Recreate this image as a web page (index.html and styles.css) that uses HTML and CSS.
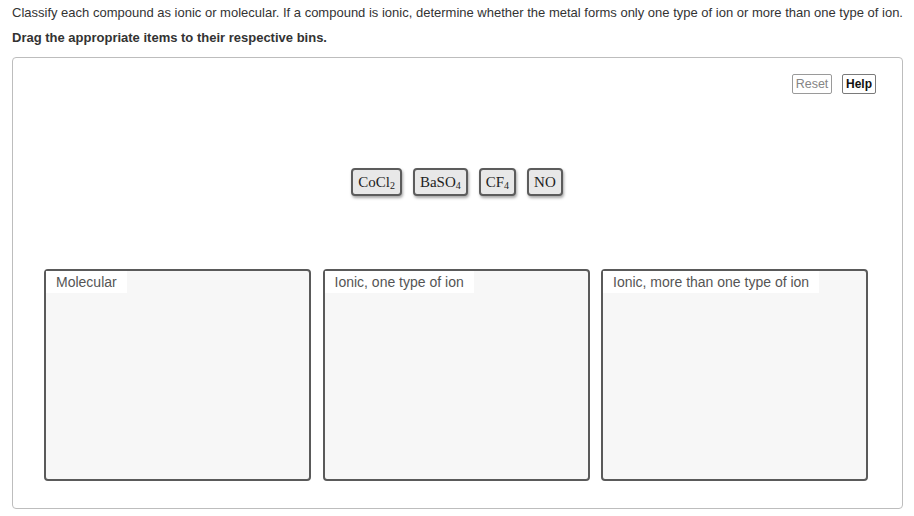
FILE: index.html
```html
<!DOCTYPE html>
<html>
<head>
<meta charset="utf-8">
<link rel="stylesheet" href="styles.css">
</head>
<body>
<div class="page">
  <p class="intro">Classify each compound as ionic or molecular. If a compound is ionic, determine whether the metal forms only one type of ion or more than one type of ion.</p>
  <p class="instr">Drag the appropriate items to their respective bins.</p>
  <div class="panel">
    <div class="toolbar">
      <button class="btn btn-reset">Reset</button>
      <button class="btn btn-help">Help</button>
    </div>
    <div class="items">
      <span class="item">CoCl<sub>2</sub></span>
      <span class="item">BaSO<sub>4</sub></span>
      <span class="item">CF<sub>4</sub></span>
      <span class="item">NO</span>
    </div>
    <div class="bins">
      <div class="bin"><span class="bin-label">Molecular</span></div>
      <div class="bin"><span class="bin-label">Ionic, one type of ion</span></div>
      <div class="bin"><span class="bin-label">Ionic, more than one type of ion</span></div>
    </div>
  </div>
</div>
</body>
</html>
```
FILE: styles.css
```css
html, body {
  margin: 0;
  padding: 0;
  background: #fff;
}
.page {
  font-family: "Liberation Sans", Arial, sans-serif;
  color: #333;
  padding: 5px 11px 0 12px;
}
.intro {
  margin: 0;
  font-size: 13px;
  line-height: 15px;
}
.instr {
  margin: 10px 0 0 0;
  font-size: 13px;
  line-height: 15px;
  font-weight: bold;
}
.panel {
  margin-top: 12px;
  height: 452px;
  border: 1px solid #bdbdbd;
  border-radius: 4px;
  box-sizing: border-box;
  padding: 16px 26px 0 31px;
}
.toolbar {
  display: flex;
  justify-content: flex-end;
  gap: 10px;
}
.btn {
  font-family: "Liberation Sans", Arial, sans-serif;
  font-size: 12.5px;
  line-height: 14px;
  height: 20px;
  padding: 2px 0;
  background: #fff;
  border: 1px solid #7a7a7a;
  border-radius: 2px;
  box-sizing: border-box;
  text-align: center;
}
.btn-reset {
  color: #858585;
  border-color: #9a9a9a;
  width: 40px;
}
.btn-help {
  color: #111;
  font-weight: bold;
  font-size: 12px;
  width: 34px;
}
.items {
  display: flex;
  justify-content: center;
  gap: 11px;
  margin-top: 74px;
  padding-right: 6px;
}
.item {
  font-family: "Liberation Serif", "Times New Roman", serif;
  font-size: 15px;
  color: #222;
  background: #e8e8e8;
  border: 2px solid #5c5c5c;
  border-radius: 4px;
  height: 28px;
  box-sizing: border-box;
  padding: 2px 5px 0 5px;
  line-height: 20px;
  box-shadow: 1px 2px 3px rgba(0,0,0,0.35);
}
.item sub {
  font-size: 10px;
  line-height: 0;
  vertical-align: -2px;
}
.bins {
  display: flex;
  gap: 11.5px;
  margin-top: 73px;
}
.bin {
  width: 267px;
  height: 212px;
  box-sizing: border-box;
  background: #f7f7f7;
  border: 2px solid #5a5a5a;
  border-radius: 4px;
  padding: 0;
}
.bin-label {
  display: inline-block;
  background: #fff;
  color: #555;
  font-size: 14px;
  line-height: 22px;
  padding: 0 10px 0 10px;
}
```
